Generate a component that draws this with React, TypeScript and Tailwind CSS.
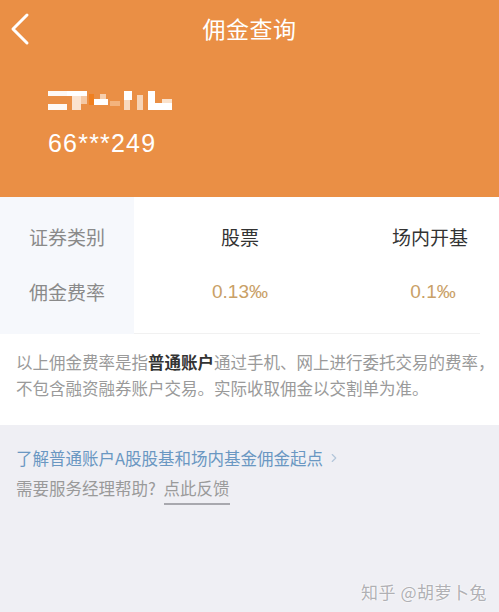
import { ChevronRight } from 'lucide-react'

const font = { fontFamily: '"Noto Sans CJK SC", "Noto Sans", sans-serif' }
const latin = { fontFamily: '"Liberation Sans", Arial, sans-serif' }

// 打码的用户名（马赛克块）
function MaskedName() {
  return (
    <svg width="124" height="24" viewBox="0 0 124 24" className="block">
      <rect x="0" y="2" width="19" height="5" fill="#fff" opacity="0.95" />
      <rect x="0" y="15" width="19" height="6" fill="#fff" opacity="0.95" />
      <rect x="19" y="2" width="20" height="5" fill="#fff" />
      <rect x="24" y="7" width="9" height="14" fill="#fbe3cf" />
      <rect x="33" y="7" width="6" height="8" fill="#f5c8a3" />
      <rect x="41" y="5" width="5" height="11" fill="#f07f1e" />
      <rect x="46" y="10" width="14" height="6" fill="#fff" />
      <rect x="52" y="5" width="6" height="5" fill="#f6cfae" />
      <rect x="62" y="12" width="10" height="5" fill="#f3b37d" />
      <rect x="76" y="2" width="8" height="9" fill="#fff" />
      <rect x="76" y="11" width="6" height="10" fill="#f8d9bf" />
      <rect x="89" y="6" width="6" height="15" fill="#f7d4b6" />
      <rect x="100" y="2" width="7" height="12" fill="#fff" />
      <rect x="100" y="14" width="24" height="7" fill="#fff" />
      <rect x="114" y="10" width="10" height="4" fill="#fae2cc" />
    </svg>
  )
}

export default function App() {
  return (
    <div className="h-[612px] w-[499px] flex flex-col bg-[#efeff4] overflow-hidden" style={font}>
      {/* Header */}
      <header className="h-[197px] shrink-0 bg-[#ea8f45] text-white">
        <div className="relative h-[56px] flex items-center justify-center">
          <svg className="absolute left-[8px] top-[12px]" width="26" height="34" viewBox="0 0 26 34" fill="none">
            <polyline points="19,3 5,17 19,31" stroke="#fff" strokeWidth="3" strokeLinecap="round" strokeLinejoin="round" />
          </svg>
          <h1 className="text-[23px] leading-none tracking-[0.5px]">佣金查询</h1>
        </div>
        <div className="pl-[48px] pt-[33px]">
          <MaskedName />
          <div className="mt-[18px] text-[25px] leading-none tracking-[1.2px]" style={latin}>
            66***249
          </div>
        </div>
      </header>

      {/* Rates table */}
      <section className="bg-white">
        <div className="flex">
          <div className="w-[134px] bg-[#f6f8fc] py-[13px] text-[#8a8a8a] text-[19px]">
            <div className="h-[55px] flex items-center justify-center">证券类别</div>
            <div className="h-[55px] flex items-center justify-center">佣金费率</div>
          </div>
          <div className="flex-1 py-[13px] border-b border-[#f1f1f1] mr-[19px] text-[19px]">
            <div className="h-[55px] grid grid-cols-[212px_1fr] items-center text-[#333]">
              <div className="text-center">股票</div>
              <div className="pl-[34px] text-center">场内开基</div>
            </div>
            <div className="h-[55px] grid grid-cols-[212px_1fr] items-center text-[#c9a066]" style={latin}>
              <div className="text-center">0.13‰</div>
              <div className="pl-[40px] text-center">0.1‰</div>
            </div>
          </div>
        </div>
        <div className="px-[16px] pt-[15px] pb-[24px] text-[16.5px] leading-[26px] text-[#9a9a9a] whitespace-nowrap">
          <div>
            以上佣金费率是指<span className="font-bold text-[#333]">普通账户</span>通过手机、网上进行委托交易的费率，
          </div>
          <div>不包含融资融券账户交易。实际收取佣金以交割单为准。</div>
        </div>
      </section>

      {/* Links */}
      <section className="relative flex-1 px-[16px] pt-[20px]">
        <div className="flex items-center text-[16.5px] leading-[26px] text-[#6a97c2]">
          了解普通账户A股股基和场内基金佣金起点
          <ChevronRight className="ml-[4px] w-[14px] h-[14px] text-[#b3c6da]" strokeWidth={2} />
        </div>
        <div className="mt-[4px] text-[16.5px] leading-[26px] text-[#9a9a9a]">
          需要服务经理帮助?{' '}
          <span className="ml-[4px] border-b-2 border-[#a8a8ae] pb-[3px]">点此反馈</span>
        </div>
        <div className="absolute right-[12px] bottom-[8px] text-[17px] text-[#b0b0b4] tracking-[0.5px]" style={{ textShadow: '0 0 2px #fff, 0 0 2px #fff' }}>
          知乎 @胡萝卜兔
        </div>
      </section>
    </div>
  )
}
